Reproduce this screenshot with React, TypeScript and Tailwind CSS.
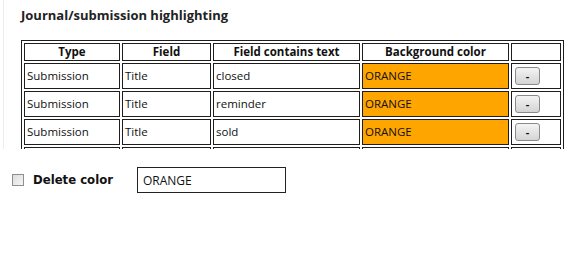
const rows = [
  { type: "Submission", field: "Title", text: "closed", color: "ORANGE" },
  { type: "Submission", field: "Title", text: "reminder", color: "ORANGE" },
  { type: "Submission", field: "Title", text: "sold", color: "ORANGE" },
];

const td = "border border-[#1e1e1e] px-[2px] text-left font-normal";
const th = "border border-[#1e1e1e] px-[2px] text-center font-bold";

export default function App() {
  return (
    <div className="w-[568px] h-[255px] bg-white text-[#111] font-['Open_Sans',sans-serif]">
      <div className="ml-[3px] h-[149px] overflow-hidden border-l border-[#ececec] pl-[17px]">
        <h2 className="pt-[5px] h-[40px] text-[13px] font-bold leading-[20px] text-[#222]">
          Journal/submission highlighting
        </h2>
        <table className="border-separate border-spacing-[2px] border border-[#1e1e1e] text-[11.5px] leading-[16px]">
          <thead>
            <tr className="h-[18px]">
              <th className={`${th} w-[96px]`}>Type</th>
              <th className={`${th} w-[89px]`}>Field</th>
              <th className={`${th} w-[147px]`}>Field contains text</th>
              <th className={`${th} w-[147px]`}>Background color</th>
              <th className={`${th} w-[50px]`}></th>
            </tr>
          </thead>
          <tbody>
            {rows.map((r, i) => (
              <tr key={i} className="h-[26px]">
                <td className={td}>{r.type}</td>
                <td className={td}>{r.field}</td>
                <td className={td}>{r.text}</td>
                <td className={`${td} bg-[#ffa500]`}>{r.color}</td>
                <td className={td}>
                  <button className="flex items-center justify-center w-[25px] h-[18px] ml-[1px] rounded-[3px] border border-[#8a8a8a] bg-gradient-to-b from-[#f4f4f4] to-[#d4d4d4] text-[11px] font-bold">
                    -
                  </button>
                </td>
              </tr>
            ))}
            <tr className="h-[26px]">
              <td className={td}></td>
              <td className={td}></td>
              <td className={td}></td>
              <td className={td}></td>
              <td className={td}></td>
            </tr>
          </tbody>
        </table>
      </div>
      <div className="flex items-center mt-[18px] h-[26px]">
        <input
          type="checkbox"
          className="ml-[12px] w-[12px] h-[12px] appearance-none border border-[#8f8f8f] bg-gradient-to-br from-[#dcdcdc] to-[#f6f6f6]"
        />
        <span className="ml-[9px] w-[104px] text-[13px] font-bold font-['DejaVu_Sans_Condensed','DejaVu_Sans',sans-serif] text-[#111]">
          Delete color
        </span>
        <input
          defaultValue="ORANGE"
          className="w-[149px] h-[26px] border border-[#222] px-[5px] text-[12px] outline-none"
        />
      </div>
    </div>
  );
}
